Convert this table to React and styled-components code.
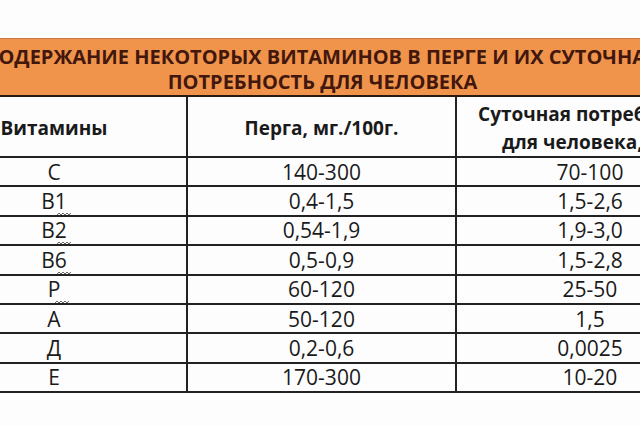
import React from "react";
import styled, { createGlobalStyle } from "styled-components";

const GlobalStyle = createGlobalStyle`
  html, body {
    margin: 0;
    padding: 0;
    background: #fdfdfd;
  }
  * {
    box-sizing: border-box;
  }
`;

const Page = styled.div`
  width: 640px;
  height: 426px;
  overflow: hidden;
  padding-top: 38px;
  font-family: "Open Sans", "Liberation Sans", sans-serif;
  color: #1a1a1a;
`;

const Sheet = styled.div`
  width: 801px;
  margin-left: -78px;
`;

const Title = styled.div`
  height: 59px;
  background: #f0944c;
  border-top: 1px solid #c57a44;
  border-bottom: 2px solid #2a1a14;
  color: #42170d;
  font-weight: 700;
  font-size: 20px;
  line-height: 25px;
  text-align: center;
  white-space: nowrap;
  padding-top: 5px;
`;

const Row = styled.div`
  display: grid;
  grid-template-columns: 266px 269px 266px;
  height: ${(p) => (p.$head ? "61px" : "29.4px")};
  border-bottom: 2px solid #222;
`;

const Cell = styled.div`
  display: flex;
  align-items: center;
  justify-content: center;
  text-align: center;
  border-right: ${(p) => (p.$last ? "none" : "2px solid #222")};
  font-size: ${(p) => (p.$head ? "19px" : "21px")};
  font-weight: ${(p) => (p.$head ? 700 : 400)};
  line-height: ${(p) => (p.$head ? "28px" : "1")};
  white-space: nowrap;
  padding-top: ${(p) => (p.$head ? "2px" : "1px")};
`;

const Label = styled.span`
  position: relative;
  display: inline-block;
`;

const Squiggle = styled.svg`
  position: absolute;
  left: 60%;
  bottom: -5px;
  width: 14px;
  height: 5px;
`;

const Wavy = () => (
  <Squiggle viewBox="0 0 14 5">
    <path
      d="M0 3 L2 1 L4 3 L6 1 L8 3 L10 1 L12 3 L14 1"
      fill="none"
      stroke="#666"
      strokeWidth="1"
    />
  </Squiggle>
);

const rows = [
  ["С", "140-300", "70-100", false],
  ["В1", "0,4-1,5", "1,5-2,6", true],
  ["В2", "0,54-1,9", "1,9-3,0", true],
  ["В6", "0,5-0,9", "1,5-2,8", true],
  ["Р", "60-120", "25-50", true],
  ["А", "50-120", "1,5", false],
  ["Д", "0,2-0,6", "0,0025", false],
  ["Е", "170-300", "10-20", false],
];

export default function App() {
  return (
    <Page>
      <GlobalStyle />
      <Sheet>
        <Title>
          СОДЕРЖАНИЕ НЕКОТОРЫХ ВИТАМИНОВ В ПЕРГЕ И ИХ СУТОЧНАЯ
          <br />
          ПОТРЕБНОСТЬ ДЛЯ ЧЕЛОВЕКА
        </Title>
        <Row $head>
          <Cell $head>Витамины</Cell>
          <Cell $head>Перга, мг./100г.</Cell>
          <Cell $head $last>
            Суточная потребность
            <br />
            для человека, мг.
          </Cell>
        </Row>
        {rows.map(([name, perga, daily, marked]) => (
          <Row key={name}>
            <Cell>
              <Label>
                {name}
                {marked && <Wavy />}
              </Label>
            </Cell>
            <Cell>{perga}</Cell>
            <Cell $last>{daily}</Cell>
          </Row>
        ))}
      </Sheet>
    </Page>
  );
}
